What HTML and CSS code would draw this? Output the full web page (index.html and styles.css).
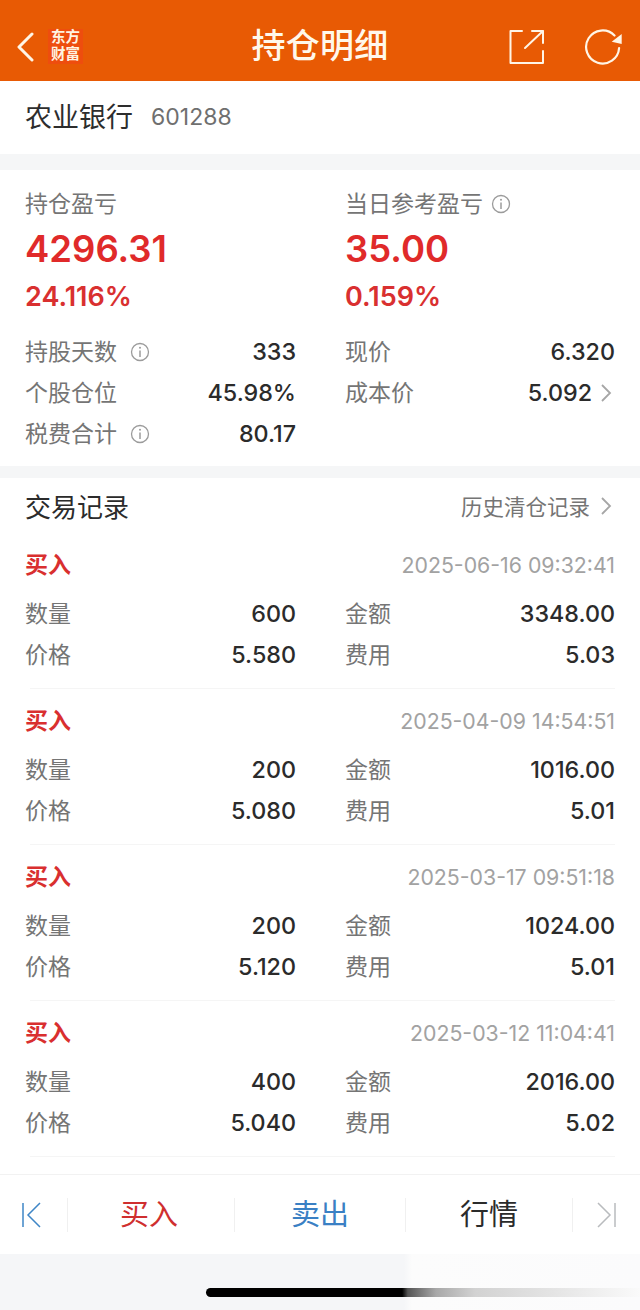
FILE: index.html
```html
<!DOCTYPE html>
<html lang="zh">
<head>
<meta charset="utf-8">
<title>持仓明细</title>
<link rel="stylesheet" href="styles.css">
</head>
<body>
<div class="page">
  <header class="topbar">
    <div class="top-left">
      <svg class="back" viewBox="0 0 18 30" width="18" height="30"><path d="M16 2 L3 15 L16 28" fill="none" stroke="#fff5e6" stroke-width="3" stroke-linecap="round" stroke-linejoin="round"/></svg>
      <div class="logo"><span>东方</span><span>财富</span></div>
    </div>
    <h1 class="title">持仓明细</h1>
    <div class="top-right">
      <svg viewBox="0 0 38 38" width="38" height="38"><path d="M14 3 H2.500 V35 H35 V23 M17 20 L35 3 M24 3 H35 V15" fill="none" stroke="#fff5e6" stroke-width="2" stroke-linecap="round" stroke-linejoin="round"/></svg>
      <svg viewBox="0 0 40 38" width="40" height="38"><path d="M30.500 7.500 A16.500 16.500 0 1 0 35.100 20" fill="none" stroke="#fff5e6" stroke-width="2.200" stroke-linecap="round"/><path d="M37.700 6 L37.700 16 L27.700 13.700 Z" fill="#fff5e6"/></svg>
    </div>
  </header>

  <section class="stock">
    <span class="stock-name">农业银行</span><span class="stock-code">601288</span>
  </section>

  <section class="summary">
    <div class="hero-grid">
      <div class="hero">
        <div class="hero-label">持仓盈亏</div>
        <div class="hero-value">4296.31</div>
        <div class="hero-pct">24.116%</div>
      </div>
      <div class="hero">
        <div class="hero-label">当日参考盈亏<svg class="info" viewBox="0 0 20 20"><use href="#i"/></svg></div>
        <div class="hero-value">35.00</div>
        <div class="hero-pct">0.159%</div>
      </div>
    </div>
    <div class="kv-grid">
      <div class="kv"><span class="k">持股天数<svg class="info" viewBox="0 0 20 20"><use href="#i"/></svg></span><span class="v">333</span></div>
      <div class="kv"><span class="k">现价</span><span class="v">6.320</span></div>
      <div class="kv"><span class="k">个股仓位</span><span class="v">45.98%</span></div>
      <div class="kv"><span class="k">成本价</span><span class="v">5.092<svg class="chev" viewBox="0 0 12 20"><use href="#c"/></svg></span></div>
      <div class="kv"><span class="k">税费合计<svg class="info" viewBox="0 0 20 20"><use href="#i"/></svg></span><span class="v">80.17</span></div>
    </div>
  </section>

  <section class="trades">
    <div class="trades-head">
      <span class="trades-title">交易记录</span>
      <span class="history">历史清仓记录<svg class="chev" viewBox="0 0 12 20"><use href="#c"/></svg></span>
    </div>

    <article class="trade">
      <div class="trade-top"><span class="side">买入</span><time class="time">2025-06-16 09:32:41</time></div>
      <div class="kv-grid">
        <div class="kv"><span class="k">数量</span><span class="v">600</span></div>
        <div class="kv"><span class="k">金额</span><span class="v">3348.00</span></div>
        <div class="kv"><span class="k">价格</span><span class="v">5.580</span></div>
        <div class="kv"><span class="k">费用</span><span class="v">5.03</span></div>
      </div>
    </article>
    <article class="trade">
      <div class="trade-top"><span class="side">买入</span><time class="time">2025-04-09 14:54:51</time></div>
      <div class="kv-grid">
        <div class="kv"><span class="k">数量</span><span class="v">200</span></div>
        <div class="kv"><span class="k">金额</span><span class="v">1016.00</span></div>
        <div class="kv"><span class="k">价格</span><span class="v">5.080</span></div>
        <div class="kv"><span class="k">费用</span><span class="v">5.01</span></div>
      </div>
    </article>
    <article class="trade">
      <div class="trade-top"><span class="side">买入</span><time class="time">2025-03-17 09:51:18</time></div>
      <div class="kv-grid">
        <div class="kv"><span class="k">数量</span><span class="v">200</span></div>
        <div class="kv"><span class="k">金额</span><span class="v">1024.00</span></div>
        <div class="kv"><span class="k">价格</span><span class="v">5.120</span></div>
        <div class="kv"><span class="k">费用</span><span class="v">5.01</span></div>
      </div>
    </article>
    <article class="trade">
      <div class="trade-top"><span class="side">买入</span><time class="time">2025-03-12 11:04:41</time></div>
      <div class="kv-grid">
        <div class="kv"><span class="k">数量</span><span class="v">400</span></div>
        <div class="kv"><span class="k">金额</span><span class="v">2016.00</span></div>
        <div class="kv"><span class="k">价格</span><span class="v">5.040</span></div>
        <div class="kv"><span class="k">费用</span><span class="v">5.02</span></div>
      </div>
    </article>
  </section>

  <nav class="toolbar">
    <div class="tool tool-end"><svg viewBox="0 0 20 30" width="20" height="30"><path d="M2 3 V27 M19 3 L7 15 L19 27" fill="none" stroke="#3f86c6" stroke-width="1.500"/></svg></div>
    <div class="tool tool-buy">买入</div>
    <div class="tool tool-sell">卖出</div>
    <div class="tool tool-quote">行情</div>
    <div class="tool tool-end"><svg viewBox="0 0 20 30" width="20" height="30"><path d="M1 3 L13 15 L1 27" fill="none" stroke="#b9bbbe" stroke-width="1.500"/><path d="M18 3 V27" fill="none" stroke="#b9bbbe" stroke-width="1.500"/></svg></div>
  </nav>

  <footer class="home-area"><div class="home-bar"></div></footer>
</div>

<svg class="defs" width="0" height="0">
  <symbol id="i" viewBox="0 0 20 20"><circle cx="10" cy="10" r="8.500" fill="none" stroke="#9b9b9b" stroke-width="1.300"/><path d="M10 8.500 V15" stroke="#9b9b9b" stroke-width="1.500"/><circle cx="10" cy="5.800" r="1" fill="#9b9b9b"/></symbol>
  <symbol id="c" viewBox="0 0 12 20"><path d="M2 2 L10 10 L2 18" fill="none" stroke="#a6a6a6" stroke-width="1.800"/></symbol>
</svg>
</body>
</html>
```
FILE: styles.css
```css
* { box-sizing: border-box; }
html, body { margin: 0; padding: 0; }
body {
  width: 640px;
  height: 1310px;
  overflow: hidden;
  background: #f5f6f7;
  font-family: Inter, Roboto, "Noto Sans CJK SC", sans-serif;
  color: #2b2b2b;
}
.page { display: flex; flex-direction: column; height: 1310px; }
.defs { display: block; height: 0; }

.topbar {
  height: 81px;
  flex: none;
  background: #e85a04;
  display: flex;
  align-items: center;
  justify-content: space-between;
  padding: 12px 16px 0 16px;
}
.top-left { display: flex; align-items: center; gap: 14px; width: 160px; }
.logo {
  display: flex;
  flex-direction: column;
  align-items: center;
  width: 35px;
  height: 35px;
  background: #ee4d0e;
  color: #fff3e0;
  font-family: "Liberation Serif", "Noto Sans CJK SC", serif;
  font-size: 14.500px;
  font-weight: 700;
  line-height: 17px;
  white-space: nowrap;
}
.title {
  margin: 0 0 5px;
  font-family: "Noto Sans CJK SC", sans-serif;
  font-size: 34px;
  font-weight: 500;
  letter-spacing: 0.300px;
  color: #fff8ec;
  line-height: 44px;
}
.top-right { display: flex; align-items: center; gap: 38px; width: 160px; justify-content: flex-end; }

.stock {
  height: 73px;
  flex: none;
  background: #fff;
  display: flex;
  align-items: center;
  padding: 0 25px;
}
.stock-name { font-family: "Noto Sans CJK SC", sans-serif; font-size: 27px; color: #2d2d2d; padding-bottom: 4px; }
.stock-code { margin-left: 18px; font-size: 23px; color: #6f6f6f; padding-bottom: 1px; }

.summary {
  margin-top: 16px;
  height: 296px;
  flex: none;
  background: #fff;
  padding: 12px 25px 0;
}
.hero-grid { display: grid; grid-template-columns: 271px 270px; column-gap: 49px; }
.hero-label {
  display: flex;
  align-items: center;
  gap: 8px;
  height: 43px;
  padding-bottom: 4px;
  font-family: "Noto Sans CJK SC", sans-serif;
  font-size: 23px;
  color: #757575;
}
.hero-label .info { margin-top: 4px; }
.hero-value {
  height: 50px;
  line-height: 49px;
  font-size: 36.500px;
  font-weight: 600;
  color: #e02a2a;
}
.hero-pct {
  height: 44px;
  line-height: 44px;
  font-size: 27px;
  font-weight: 600;
  color: #d93030;
}
.summary .kv-grid { margin-top: 12px; }

.kv-grid {
  display: grid;
  grid-template-columns: 271px 270px;
  column-gap: 49px;
}
.kv {
  height: 41px;
  display: flex;
  align-items: center;
  justify-content: space-between;
}
.k {
  display: flex;
  align-items: center;
  gap: 13px;
  font-family: "Noto Sans CJK SC", sans-serif;
  font-size: 23px;
  color: #757575;
  padding-bottom: 4px;
}
.k .info { margin-top: 4px; }
.v {
  display: flex;
  align-items: center;
  gap: 8px;
  font-size: 23.300px;
  font-weight: 500;
  color: #2b2b2b;
}
.v .chev { margin-right: 3px; }
.info { width: 20px; height: 20px; flex: none; }
.chev { width: 12px; height: 20px; flex: none; }

.trades {
  margin-top: 12px;
  height: 696px;
  flex: none;
  background: #fff;
  padding: 0 25px;
  overflow: hidden;
}
.trades-head {
  height: 55px;
  display: flex;
  align-items: center;
  justify-content: space-between;
}
.trades-title { font-family: "Noto Sans CJK SC", sans-serif; font-size: 26px; color: #2b2b2b; }
.history {
  display: flex;
  align-items: center;
  gap: 10px;
  padding-right: 3px;
  font-family: "Noto Sans CJK SC", sans-serif;
  font-size: 21.500px;
  color: #757575;
}
.trade {
  height: 156px;
  padding-top: 7px;
  border-bottom: 1px solid #f5f5f5;
  margin-left: 5px;
}
.trade .kv-grid, .trade-top { margin-left: -5px; }
.trade-top {
  height: 48px;
  display: flex;
  align-items: center;
  justify-content: space-between;
  margin-bottom: 5px;
}
.side { font-family: "Noto Sans CJK SC", sans-serif; font-size: 23px; font-weight: 700; color: #d92f2f; padding-bottom: 2px; }
.time { font-size: 21.300px; color: #a2a2a2; margin-top: 2px; }

.toolbar {
  height: 80px;
  flex: none;
  background: #fff;
  border-top: 1px solid #f2f2f2;
  display: grid;
  grid-template-columns: 68px 167px 171px 167px 67px;
  align-items: center;
}
.tool {
  height: 34px;
  display: flex;
  align-items: center;
  justify-content: center;
  padding-bottom: 5px;
  font-family: "Noto Sans CJK SC", sans-serif;
  font-size: 29px;
  border-right: 1px solid #f0f0f0;
}
.tool:last-child { border-right: 0; }
.tool-end { padding-bottom: 0; }
.tool-end:first-child svg { margin-right: 6px; }
.tool-buy { color: #cf2f2f; padding-right: 4px; }
.tool-sell { color: #3a80c4; }
.tool-quote { color: #2b2b2b; }

.home-area { flex: 1; background: linear-gradient(90deg, #f5f6f8 0 404px, #fcfcfc 412px, #fbfbfc 100%); position: relative; }
.home-bar {
  position: absolute;
  left: 206px;
  top: 34px;
  width: 434px;
  height: 9px;
  border-radius: 5px 0 0 5px;
  background: linear-gradient(90deg, #000 0, #000 45.200%, #555 46.500%, #a8a8a8 53%, #d2d2d2 62%, #e4e4e4 80%, #fafafa 100%);
}
```
